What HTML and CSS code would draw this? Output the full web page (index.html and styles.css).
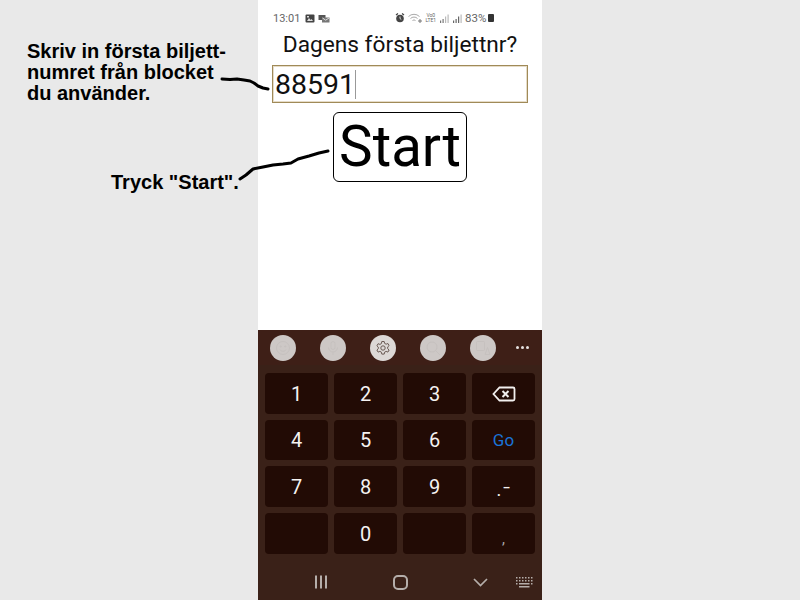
FILE: index.html
```html
<!DOCTYPE html>
<html lang="en">
<head>
    <meta charset="UTF-8">
    <title>Biljettnummer</title>
    <link rel="stylesheet" href="styles.css">
</head>
<body>
    <div class="page">
        <div class="side">
            <p class="note note-first">Skriv in första biljett-<br>numret från blocket<br>du använder.</p>
            <p class="note note-start">Tryck "Start".</p>
        </div>

        <div class="phone">
            <div class="screen">
                <div class="status">
                    <span class="clock">13:01</span>
                    <svg class="st-icon" width="10" height="9" viewBox="0 0 10 9"><rect x="0.5" y="0.5" width="9" height="8" rx="1" fill="#444"/><path d="M2 7l2-3 1.500 2 1-1L8 7z" fill="#ddd"/><rect x="2" y="2" width="2" height="1.500" fill="#ddd"/></svg>
                    <svg class="st-icon" width="12" height="9" viewBox="0 0 12 9"><rect x="0.5" y="1" width="7" height="5" fill="#555"/><rect x="4" y="3.500" width="7.500" height="5" fill="#777"/><path d="M4.500 4l3.200 2.200L11 4" stroke="#ddd" fill="none"/></svg>
                    <span class="status-gap"></span>
                    <svg class="st-icon" width="10" height="10" viewBox="0 0 10 10"><circle cx="5" cy="5.500" r="3.800" fill="#444"/><path d="M1 2l2-1.500M9 2L7 .5" stroke="#444" stroke-width="1.300"/><path d="M5 3.500v2l1.300 1" stroke="#ddd" fill="none"/></svg>
                    <svg class="st-icon" width="14" height="10" viewBox="0 0 14 10"><path d="M.5 3.500a8 8 0 0 1 11 0M2.500 5.500a5 5 0 0 1 7 0M4.500 7.500a2.400 2.400 0 0 1 3 0" stroke="#aaa" fill="none"/><path d="M10 8h4M12 6v4" stroke="#777"/></svg>
                    <span class="volte">Vo0<br>LTE1</span>
                    <svg class="st-icon" width="10" height="9" viewBox="0 0 10 9"><path d="M1 6.500h1.200V9H1zM3.500 5h1.200v4H3.500z" fill="#777"/><path d="M6 2.500h1.200V9H6zM8.500 .5h1.200V9H8.500z" fill="#bbb"/></svg>
                    <svg class="st-icon" width="10" height="9" viewBox="0 0 10 9"><path d="M1 6.500h1.200V9H1zM3.500 5h1.200v4H3.500zM6 2.500h1.200V9H6z" fill="#666"/><path d="M8.500 .5h1.200V9H8.500z" fill="#bbb"/></svg>
                    <span class="battery-pct">83%</span>
                    <span class="battery"></span>
                </div>
                <h1 class="title">Dagens första biljettnr?</h1>
                <div class="field"><span class="field-value">88591</span><span class="caret"></span></div>
                <button class="start" type="button">Start</button>
            </div>

            <div class="keyboard">
                <div class="toolbar">
                    <span class="tool">
                        <svg width="16" height="16" viewBox="0 0 16 16" fill="none" stroke="#c6c1bf"><circle cx="8" cy="8" r="6.500"/><circle cx="5.700" cy="6.500" r=".6"/><circle cx="10.300" cy="6.500" r=".6"/><path d="M5 9.800c1.500 2 4.500 2 6 0"/></svg>
                    </span>
                    <span class="tool">
                        <svg width="16" height="16" viewBox="0 0 16 16" fill="none" stroke="#c6c1bf"><rect x="6" y="1.500" width="4" height="8" rx="2"/><path d="M3.500 7.500a4.500 4.500 0 0 0 9 0M8 12v3"/></svg>
                    </span>
                    <span class="tool tool-on">
                        <svg width="16" height="16" viewBox="0 0 16 16" fill="none" stroke="#6a5a54"><circle cx="8" cy="8" r="2.200"/><path d="M6.800 1.500h2.400l.4 1.900 1.500.8 1.800-.7 1.200 2.100-1.400 1.300v1.800l1.400 1.300-1.200 2.100-1.800-.7-1.500.8-.4 1.900H6.800l-.4-1.900-1.500-.8-1.800.7-1.200-2.100 1.400-1.300V7.100L1.900 5.800l1.200-2.100 1.800.7 1.500-.8z"/></svg>
                    </span>
                    <span class="tool">
                        <svg width="16" height="16" viewBox="0 0 16 16" fill="none" stroke="#c6c1bf"><circle cx="7" cy="7" r="5"/><path d="M10.700 10.700L15 15"/></svg>
                    </span>
                    <span class="tool">
                        <svg width="16" height="16" viewBox="0 0 16 16" fill="none" stroke="#c6c1bf"><rect x="1.500" y="1.500" width="8" height="9" rx="1"/><path d="M10 14.500l2.500-7 2.500 7z"/></svg>
                    </span>
                    <span class="more">
                        <i></i><i></i><i></i>
                    </span>
                </div>
                <div class="keys">
                    <div class="key">1</div>
                    <div class="key">2</div>
                    <div class="key">3</div>
                    <div class="key">
                        <svg width="24" height="16" viewBox="0 0 24 16" fill="none" stroke="#f2efee" stroke-width="1.800"><path d="M7.500 1.500H21a1.500 1.500 0 0 1 1.500 1.500v10a1.500 1.500 0 0 1-1.500 1.500H7.500L1.500 8z"/><path d="M10.500 5l6 6M16.500 5l-6 6" stroke-width="2"/></svg>
                    </div>
                    <div class="key">4</div>
                    <div class="key">5</div>
                    <div class="key">6</div>
                    <div class="key key-go">Go</div>
                    <div class="key">7</div>
                    <div class="key">8</div>
                    <div class="key">9</div>
                    <div class="key key-dash">.-</div>
                    <div class="key"></div>
                    <div class="key">0</div>
                    <div class="key"></div>
                    <div class="key key-comma">,</div>
                </div>
                <div class="navbar">
                    <svg class="nav-recent" width="14" height="14" viewBox="0 0 14 14" fill="#b5aeaa"><rect x="1" y="0.500" width="2" height="13"/><rect x="6" y="0.500" width="2" height="13"/><rect x="11" y="0.500" width="2" height="13"/></svg>
                    <svg class="nav-home" width="15" height="15" viewBox="0 0 15 15" fill="none" stroke="#b5aeaa" stroke-width="2"><rect x="1" y="1" width="13" height="13" rx="4"/></svg>
                    <svg class="nav-back" width="15" height="9" viewBox="0 0 15 9" fill="none" stroke="#b5aeaa" stroke-width="1.700"><path d="M1 1l6.500 6.500L14 1"/></svg>
                    <svg class="nav-kbd" width="17" height="11" viewBox="0 0 17 11" fill="#b5aeaa"><path d="M0 0h1.500v1.500H0zM3 0h1.500v1.500H3zM6 0h1.500v1.500H6zM9 0h1.500v1.500H9zM12 0h1.500v1.500H12zM15 0h1.500v1.500H15zM0 3h1.500v1.500H0zM3 3h1.500v1.500H3zM6 3h1.500v1.500H6zM9 3h1.500v1.500H9zM12 3h1.500v1.500H12zM15 3h1.500v1.500H15zM0 6h1.500v1.500H0zM15 6h1.500v1.500H15zM3 6h10.500v1.500H3zM3 9h10.500v1.500H3z"/></svg>
                </div>
            </div>
        </div>
    </div>

    <!-- hand drawn arrows go across the side panel and the phone -->
    <svg class="arrows" width="800" height="600" viewBox="0 0 800 600" fill="none" stroke="#000" stroke-linecap="round" stroke-linejoin="round">
        <path d="M222 79l8 .5 7-.5 7 1 6 1 4 2 4 3 5 2 5 1" stroke-width="3"/>
        <path d="M240 179l6-4 7-6 10-2 10-2 10-1 8-1 7-4 11-3 10-3 9-2" stroke-width="3"/>
    </svg>
</body>
</html>
```

FILE: styles.css
```css
* {
    box-sizing: border-box;
}
body {
    margin: 0;
    background-color: #e9e9e9;
    font-family: Roboto, sans-serif;
    overflow: hidden;
}
.page {
    display: flex;
    width: 800px;
    height: 600px;
}
.side {
    position: relative;
    width: 258px;
}
.note {
    position: absolute;
    margin: 0;
    font-family: "Liberation Sans", Arial, sans-serif;
    font-size: 20px;
    font-weight: bold;
    line-height: 21px;
    color: #000;
    white-space: nowrap;
}
.note-first {
    left: 27px;
    top: 41px;
}
.note-start {
    left: 111px;
    top: 172px;
}
.phone {
    display: flex;
    flex-direction: column;
    width: 284px;
    height: 600px;
}
.screen {
    display: flex;
    flex-direction: column;
    align-items: center;
    height: 330px;
    background: #fff;
}
.status {
    display: flex;
    align-items: center;
    gap: 3px;
    width: 100%;
    height: 30px;
    padding: 6px 0 0 15px;
    font-size: 11px;
    color: #666;
}
.clock {
    margin-right: 2px;
}
.status-gap {
    width: 59px;
}
.volte {
    font-size: 5px;
    line-height: 5px;
    text-align: center;
}
.battery-pct {
    font-size: 11.500px;
}
.battery {
    width: 6px;
    height: 8px;
    margin-left: -1px;
    background: #333;
    border-radius: 1px;
}
.title {
    margin: 0;
    font-size: 22.700px;
    font-weight: 400;
    line-height: 30px;
    color: #111;
}
.field {
    display: flex;
    align-items: center;
    align-self: flex-start;
    width: 256px;
    height: 38px;
    margin: 5px 0 0 14px;
    padding-left: 2px;
    border: 1px solid #a08a58;
    box-shadow: inset 0 0 0 1px #e6dcc8;
    font-size: 28.500px;
    color: #111;
}
.caret {
    width: 1px;
    height: 29px;
    background: #999;
}
.start {
    width: 134px;
    height: 70px;
    margin-top: 9px;
    padding: 0;
    background: #fff;
    border: 1px solid #000;
    border-radius: 6px;
    font-family: Roboto, sans-serif;
    font-size: 56.500px;
    color: #000;
}
.keyboard {
    display: flex;
    flex-direction: column;
    flex: 1;
    background: #3a2118;
}
.toolbar {
    display: flex;
    align-items: center;
    height: 35px;
    margin-bottom: 8px;
    padding: 0 0 0 12px;
    gap: 24px;
    background: #3e1f17;
}
.tool {
    display: flex;
    align-items: center;
    justify-content: center;
    width: 26px;
    height: 26px;
    border-radius: 50%;
    background: #cdc8c6;
}
.tool-on {
    background: #dcd8d6;
}
.more {
    display: flex;
    gap: 2px;
    margin-left: -4px;
}
.more i {
    width: 3px;
    height: 3px;
    border-radius: 50%;
    background: #e6e2e0;
}
.keys {
    display: grid;
    grid-template-columns: repeat(4, 63px);
    grid-auto-rows: 40.500px;
    column-gap: 6px;
    row-gap: 6.200px;
    padding: 0 7px;
}
.key {
    display: flex;
    align-items: center;
    justify-content: center;
    padding-top: 1px;
    background: #220b05;
    border-radius: 4px;
    font-size: 20px;
    color: #f5f2f1;
}
.key-go {
    font-size: 17px;
    color: #1a73d8;
}
.key-dash {
    font-size: 25px;
    font-weight: 300;
    letter-spacing: 1px;
}
.key-comma {
    align-items: flex-end;
    padding-bottom: 6px;
    font-size: 15px;
    color: #aaa;
}
.navbar {
    display: flex;
    align-items: center;
    flex: 1;
    padding-top: 11px;
}
.nav-recent {
    margin-left: 56px;
}
.nav-home {
    margin-left: 65px;
}
.nav-back {
    margin-left: 65px;
}
.nav-kbd {
    margin-left: 28px;
}
.arrows {
    position: absolute;
    left: 0;
    top: 0;
    pointer-events: none;
}
```
